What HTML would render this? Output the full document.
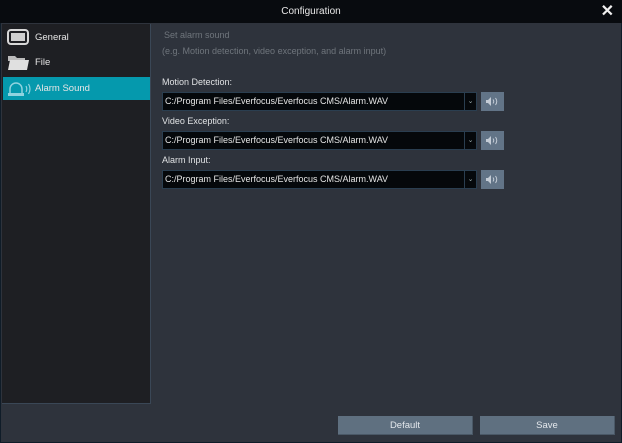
<!DOCTYPE html>
<html><head><style>
*{margin:0;padding:0;box-sizing:border-box}
body{width:622px;height:443px;background:#0f1c28;font-family:"Liberation Sans",sans-serif;font-size:9px;color:#e6e8ea;position:relative;overflow:hidden}
.title{position:absolute;left:0;top:0;width:622px;height:23px;background:#080b0f;text-align:center;line-height:23px;font-size:10px;color:#e8e8e8}
.x{position:absolute;right:8px;top:2px;font-size:16px;font-weight:bold;color:#f0f0f0;line-height:19px}
.main{position:absolute;left:1px;top:23px;width:620px;height:419px;background:#2e333c}
.left{position:absolute;left:1px;top:1px;width:149px;height:380px;background:#1e1f23;border-right:1px solid #3a4756;border-bottom:1px solid #3a4756}
.item{position:absolute;left:1px;width:147px;height:23px;line-height:23px;padding-left:32px;font-size:9.5px;color:#e6e6e6}
.sel{background:#0599ad}
.ico{position:absolute;left:4px;top:3px}
.t1{position:absolute;left:164px;top:30px;color:#6f757c;font-size:9px}
.t2{position:absolute;left:162px;top:46px;color:#6f757c;font-size:9px}
.lbl{position:absolute;left:162px;color:#e0e2e4;font-size:9px}
.sb{position:absolute;left:162px;width:315px;height:19px;background:#05080b;border:1px solid #2a3e50;color:#e6e6e6;line-height:17px;padding-left:2px;font-size:9px}
.dd{position:absolute;right:0;top:0;width:12px;height:17px;border-left:1px solid #2a3e50;text-align:center;color:#9aa;font-size:7px;line-height:17px}
.sp{position:absolute;left:481px;width:23px;height:19px;background:#627487}
.sp svg{position:absolute;left:5px;top:5px}
.btn{position:absolute;top:416px;height:19px;background:#5f7080;color:#e4e8ec;text-align:center;line-height:19px;font-size:9.5px;border-right:1px solid #4a5866;border-bottom:1px solid #4a5866}
</style></head><body>
<div class="title">Configuration<span class="x">✕</span></div>
<div class="main">
<div class="left">
<div class="item" style="top:2px"><svg class="ico" width="22" height="17" viewBox="0 0 22 17"><rect x="1" y="1" width="20" height="14" rx="3" fill="none" stroke="#d8d8d8" stroke-width="2"/><rect x="4" y="4" width="14" height="8" fill="#cfcfcf"/></svg>General</div>
<div class="item" style="top:27px"><svg class="ico" width="22" height="17" viewBox="0 0 22 17"><path d="M1 2h7l2 2h8v3H1z" fill="#bbb"/><path d="M1 16L3 6h19l-2 10z" fill="#e0e0e0"/></svg>File</div>
<div class="item sel" style="top:53px"><svg class="ico" width="26" height="17" viewBox="0 0 26 17"><path d="M3 14V9a6 6 0 0 1 12 0v5" fill="none" stroke="#8fd3df" stroke-width="1.5"/><rect x="1" y="13" width="16" height="3" fill="#8fd3df"/><path d="M19 6q1.5 3 0 6M21.5 4q3 5 0 10" fill="none" stroke="#8fd3df" stroke-width="1.2"/></svg>Alarm Sound</div>
</div>
</div>
<div class="t1">Set alarm sound</div>
<div class="t2">(e.g. Motion detection, video exception, and alarm input)</div>
<div class="lbl" style="top:77px">Motion Detection:</div>
<div class="sb" style="top:92px">C:/Program Files/Everfocus/Everfocus CMS/Alarm.WAV<div class="dd">⌄</div></div>
<div class="sp" style="top:92px"><svg width="13" height="9" viewBox="0 0 13 9"><path d="M0 3h2l3-3v9L2 6H0z" fill="#c4ccd6"/><path d="M7 2.5q1.5 2 0 4M9.5 1q2.5 3.5 0 7" fill="none" stroke="#c4ccd6" stroke-width="1"/></svg></div>
<div class="lbl" style="top:116px">Video Exception:</div>
<div class="sb" style="top:131px">C:/Program Files/Everfocus/Everfocus CMS/Alarm.WAV<div class="dd">⌄</div></div>
<div class="sp" style="top:131px"><svg width="13" height="9" viewBox="0 0 13 9"><path d="M0 3h2l3-3v9L2 6H0z" fill="#c4ccd6"/><path d="M7 2.5q1.5 2 0 4M9.5 1q2.5 3.5 0 7" fill="none" stroke="#c4ccd6" stroke-width="1"/></svg></div>
<div class="lbl" style="top:155px">Alarm Input:</div>
<div class="sb" style="top:170px">C:/Program Files/Everfocus/Everfocus CMS/Alarm.WAV<div class="dd">⌄</div></div>
<div class="sp" style="top:170px"><svg width="13" height="9" viewBox="0 0 13 9"><path d="M0 3h2l3-3v9L2 6H0z" fill="#c4ccd6"/><path d="M7 2.5q1.5 2 0 4M9.5 1q2.5 3.5 0 7" fill="none" stroke="#c4ccd6" stroke-width="1"/></svg></div>
<div class="btn" style="left:338px;width:135px">Default</div>
<div class="btn" style="left:480px;width:135px">Save</div>
</body></html>
